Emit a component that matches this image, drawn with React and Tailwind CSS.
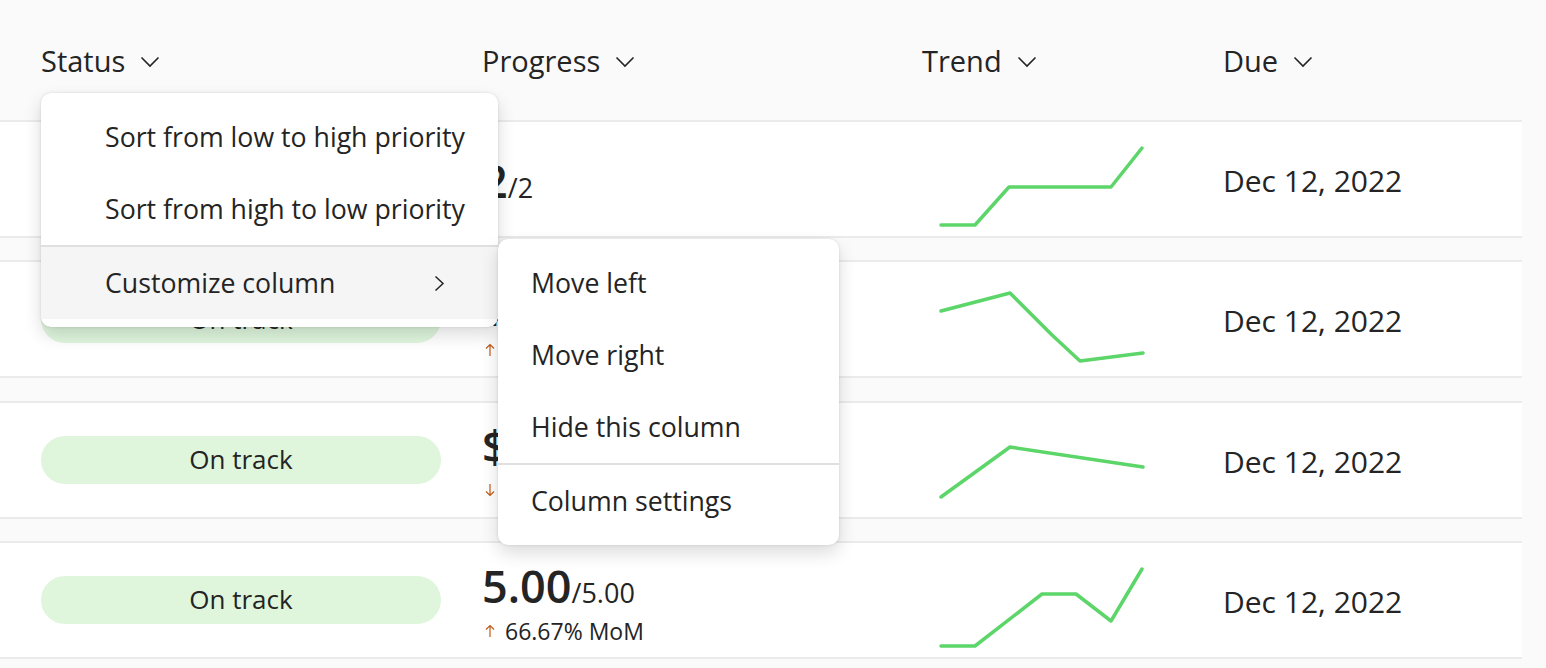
const rows = [
  {
    status: 'On track',
    value: '2',
    total: '/2',
    trend: '5,103 39,103 73,65 175,65 206,26',
  },
  {
    status: 'On track',
    value: '$1.20M',
    total: '/$1.50M',
    delta: { dir: 'up', text: '12.50% MoM' },
    trend: '5,49 74,31 116,73 144,99 207,91',
  },
  {
    status: 'On track',
    value: '$840K',
    total: '/$1.00M',
    delta: { dir: 'down', text: '4.20% MoM' },
    trend: '5,94 74,44 207,64',
  },
  {
    status: 'On track',
    value: '5.00',
    total: '/5.00',
    delta: { dir: 'up', text: '66.67% MoM' },
    trend: '5,103 39,103 106,51 140,51 175,78 206,26',
  },
];

const font = { fontFamily: '"Segoe UI", "Open Sans", "Noto Sans", sans-serif' };

function HeaderCell({ label }) {
  return (
    <div className="flex items-center gap-[15px]">
      <span className="text-[29px]">{label}</span>
      <svg width="20" height="12" viewBox="0 0 20 12" className="mt-[2px]">
        <path d="M1.5 1.5 L10 10 L18.5 1.5" fill="none" stroke="#242424" strokeWidth="1.6" />
      </svg>
    </div>
  );
}

function Arrow({ dir }) {
  // thin up/down arrow in the MoM line
  return (
    <svg width="10" height="14" viewBox="0 0 10 14" className={dir === 'down' ? 'rotate-180' : ''}>
      <path d="M5 13 V1.5 M1 5.5 L5 1.5 L9 5.5" fill="none" stroke="#c25b17" strokeWidth="1.2" />
    </svg>
  );
}

function Sparkline({ points }) {
  return (
    <svg width="212" height="114" className="ml-[14px]">
      <polyline
        points={points}
        fill="none"
        stroke="#5cd569"
        strokeWidth="3.5"
        strokeLinecap="round"
        strokeLinejoin="round"
      />
    </svg>
  );
}

function Row({ row }) {
  return (
    <div className="h-[118px] bg-white border-y-2 border-[#ebebeb] grid grid-cols-[41px_441px_440px_301px_1fr] items-center">
      <div />
      <div className="h-[48px] w-[400px] rounded-full bg-[#dff6dd] flex items-center justify-center text-[26px]">
        {row.status}
      </div>
      <div className="flex flex-col pt-[5px]">
        <div className="flex items-baseline">
          <span className="text-[45px] font-semibold leading-[54px]">{row.value}</span>
          <span className="text-[27px]">{row.total}</span>
        </div>
        {row.delta && (
          <div className="flex items-center gap-[10px] text-[23px] leading-[30px] mt-[2px] pl-[3px]">
            <Arrow dir={row.delta.dir} />
            <span>{row.delta.text}</span>
          </div>
        )}
      </div>
      <Sparkline points={row.trend} />
      <div className="text-[30px] pt-[3px]">Dec 12, 2022</div>
    </div>
  );
}

export default function App() {
  return (
    <div className="relative w-[1546px] h-[668px] overflow-hidden bg-[#fafafa] text-[#242424]" style={font}>
      {/* header */}
      <div className="h-[120px] pt-[2px] grid grid-cols-[41px_441px_440px_301px_1fr] items-center">
        <div />
        <HeaderCell label="Status" />
        <HeaderCell label="Progress" />
        <HeaderCell label="Trend" />
        <HeaderCell label="Due" />
      </div>

      {/* rows */}
      <div className="w-[1522px] flex flex-col gap-[22.33px]">
        {rows.map((r, i) => (
          <Row key={i} row={r} />
        ))}
      </div>

      {/* column menu */}
      <div className="absolute left-[41px] top-[93px] w-[457px] py-[8px] bg-white rounded-[10px] shadow-[0_0_3px_rgba(0,0,0,0.12),0_8px_18px_rgba(0,0,0,0.14)] text-[26.7px]">
        <div className="h-[72px] flex items-center pl-[64px]">Sort from low to high priority</div>
        <div className="h-[72px] flex items-center pl-[64px]">Sort from high to low priority</div>
        <div className="h-[2px] bg-[#e0e0e0]" />
        <div className="h-[72px] flex items-center justify-between pl-[64px] pr-[53px] bg-[#f5f5f5]">
          <span>Customize column</span>
          <svg width="11" height="17" viewBox="0 0 11 17">
            <path d="M1.5 1.5 L9 8.5 L1.5 15.5" fill="none" stroke="#242424" strokeWidth="1.5" />
          </svg>
        </div>
      </div>

      {/* submenu */}
      <div className="absolute left-[498px] top-[239px] w-[341px] py-[8px] bg-white rounded-[10px] shadow-[0_0_3px_rgba(0,0,0,0.12),0_8px_18px_rgba(0,0,0,0.14)] text-[26.7px]">
        <div className="h-[72px] flex items-center pl-[33px]">Move left</div>
        <div className="h-[72px] flex items-center pl-[33px]">Move right</div>
        <div className="h-[72px] flex items-center pl-[33px]">Hide this column</div>
        <div className="h-[2px] bg-[#e0e0e0]" />
        <div className="h-[72px] flex items-center pl-[33px]">Column settings</div>
      </div>
    </div>
  );
}
